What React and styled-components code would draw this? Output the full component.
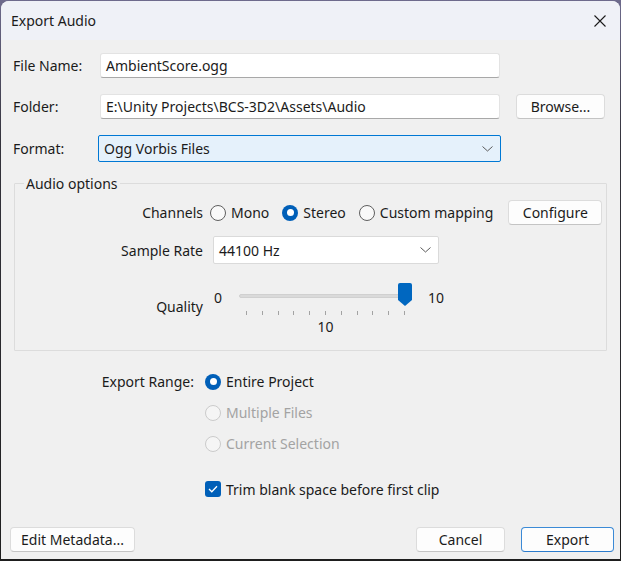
import React from "react";
import styled, { createGlobalStyle } from "styled-components";

const GlobalStyle = createGlobalStyle`
  html, body, #root { height: 100%; }
  body {
    margin: 0;
    background: linear-gradient(#6e6b8d, #34333c 25%, #1e1e1e);
    font-family: "Noto Sans", "Open Sans", sans-serif;
    font-size: 14px;
    color: #1b1b1b;
  }
`;

const Window = styled.div`
  box-sizing: border-box;
  height: calc(100% - 3px);
  margin: 1px 1px 0 1px;
  border-radius: 8px 8px 0 0;
  overflow: hidden;
  display: flex;
  flex-direction: column;
  background: #f0f0f0;
`;

const TitleBar = styled.div`
  height: 39px;
  flex: none;
  display: flex;
  align-items: center;
  justify-content: space-between;
  padding: 0 14px 0 10px;
  background: #eff1f7;
  font-size: 14px;
`;

const Body = styled.div`
  flex: 1;
  display: flex;
  flex-direction: column;
  padding: 13px 6px 7px 9px;
`;

const Row = styled.div`
  display: flex;
  align-items: center;
  margin-left: 3px;
  margin-top: ${(p) => p.$top || 0}px;
`;

const Label = styled.div`
  width: ${(p) => p.$w}px;
  flex: none;
`;

const TextBox = styled.div`
  box-sizing: border-box;
  width: 400px;
  height: 25px;
  display: flex;
  align-items: center;
  padding-left: 5px;
  background: #fff;
  border: 1px solid #e3e3e3;
  border-bottom-color: #a8a8a8;
  border-radius: 3px;
`;

const Select = styled.div`
  box-sizing: border-box;
  width: ${(p) => p.$w}px;
  height: ${(p) => p.$h}px;
  display: flex;
  align-items: center;
  justify-content: space-between;
  padding: 0 7px 0 5px;
  background: ${(p) => (p.$focus ? "#e5f1fb" : "#fff")};
  border: 1px solid ${(p) => (p.$focus ? "#0078d4" : "#dadada")};
  border-radius: 2px;
  margin-left: ${(p) => p.$ml || 0}px;
  margin-top: ${(p) => p.$top || 0}px;
`;

const Button = styled.div`
  box-sizing: border-box;
  width: ${(p) => p.$w}px;
  height: 25px;
  flex: none;
  display: flex;
  align-items: center;
  justify-content: center;
  background: #fdfdfd;
  border: 1px solid ${(p) => (p.$primary ? "#3b8ad6" : "#dcdcdc")};
  border-bottom-color: ${(p) => (p.$primary ? "#2b7bcc" : "#c4c4c4")};
  border-radius: 4px;
  margin-left: ${(p) => p.$ml || 0}px;
`;

const Group = styled.fieldset`
  margin: 12px 7px 0 4px;
  padding: 7px 0 14px 0;
  border: 1px solid #dcdcdc;
  border-radius: 1px;
`;

const Legend = styled.legend`
  margin-left: 9px;
  padding: 0 2px;
`;

const OptGrid = styled.div`
  display: grid;
  grid-template-columns: 188px 1fr;
  column-gap: 7px;
  align-items: center;
`;

const RightLabel = styled.div`
  text-align: right;
  grid-row: ${(p) => p.$row};
  margin-top: ${(p) => p.$top || 0}px;
`;

const Choices = styled.div`
  display: flex;
  align-items: center;
  gap: 13px;
`;

const Choice = styled.div`
  display: flex;
  align-items: center;
  gap: 5px;
  color: ${(p) => (p.$disabled ? "#a3a3a3" : "#1b1b1b")};
`;

const RadioDot = styled.span`
  box-sizing: border-box;
  width: 16px;
  height: 16px;
  border-radius: 50%;
  flex: none;
  background: ${(p) => (p.$on ? "#005fb8" : p.$disabled ? "#f5f5f5" : "#f9f9f9")};
  border: ${(p) =>
    p.$on ? "none" : `1px solid ${p.$disabled ? "#cbcbcb" : "#5f5f5f"}`};
  display: flex;
  align-items: center;
  justify-content: center;
  &::after {
    content: "";
    display: ${(p) => (p.$on ? "block" : "none")};
    width: 7px;
    height: 7px;
    border-radius: 50%;
    background: #fff;
  }
`;

const Check = styled.span`
  width: 16px;
  height: 16px;
  flex: none;
  border-radius: 3px;
  background: #005fb8;
  display: flex;
  align-items: center;
  justify-content: center;
`;

const QualityWrap = styled.div`
  display: flex;
  align-items: flex-start;
  margin-left: 4px;
  margin-top: 19px;
`;

const EndNum = styled.div`
  line-height: 23px;
  margin-top: 3px;
  margin-left: ${(p) => p.$ml || 0}px;
`;

const SliderCol = styled.div`
  width: 173px;
  margin-left: 17px;
  display: flex;
  flex-direction: column;
  align-items: center;
`;

const SliderBox = styled.div`
  position: relative;
  width: 100%;
  height: 23px;
`;

const Track = styled.div`
  position: absolute;
  left: 0;
  right: 0;
  top: 11px;
  height: 4px;
  border-radius: 2px;
  background: #dadada;
  border: 1px solid #d0d0d0;
  box-sizing: border-box;
`;

const Thumb = styled.svg`
  position: absolute;
  top: 0;
`;

const Ticks = styled.div`
  width: 159px;
  height: 4px;
  margin-top: 5px;
  display: flex;
  justify-content: space-between;
  span {
    width: 1px;
    height: 4px;
    background: #a3a3a3;
  }
`;

const Value = styled.div`
  margin-top: 3px;
  line-height: 18px;
`;

const RangeGrid = styled.div`
  display: grid;
  grid-template-columns: 181px 1fr;
  column-gap: 11px;
  grid-auto-rows: 31px;
  align-items: center;
  margin-top: 15px;
  margin-left: 3px;
`;

const CheckRow = styled.div`
  grid-column: 2;
  margin-top: 29px;
`;

const Footer = styled.div`
  margin-top: auto;
  display: flex;
  align-items: center;
`;

const Spacer = styled.div`
  flex: 1;
`;

const Chevron = () => (
  <svg width="11" height="6" viewBox="0 0 11 6">
    <path d="M0.5 0.5 L5.5 5 L10.5 0.5" fill="none" stroke="#5a5a5a" strokeWidth="1" />
  </svg>
);

const Radio = ({ on, disabled, children }) => (
  <Choice $disabled={disabled}>
    <RadioDot $on={on} $disabled={disabled} />
    {children}
  </Choice>
);

const App = () => {
  const quality = 10;
  const thumbLeft = (quality / 10) * (173 - 14);
  return (
    <>
      <GlobalStyle />
      <Window>
        <TitleBar>
          <span>Export Audio</span>
          <svg width="12" height="12" viewBox="0 0 12 12">
            <path d="M0.5 0.5 L11.5 11.5 M11.5 0.5 L0.5 11.5" stroke="#1b1b1b" strokeWidth="1.1" />
          </svg>
        </TitleBar>
        <Body>
          <Row>
            <Label $w={87}>File Name:</Label>
            <TextBox>AmbientScore.ogg</TextBox>
          </Row>
          <Row $top={16}>
            <Label $w={87}>Folder:</Label>
            <TextBox>E:\Unity Projects\BCS-3D2\Assets\Audio</TextBox>
            <Button $w={89} $ml={16}>Browse...</Button>
          </Row>
          <Row $top={16}>
            <Label $w={85}>Format:</Label>
            <Select $w={403} $h={27} $focus>
              <span>Ogg Vorbis Files</span>
              <Chevron />
            </Select>
          </Row>

          <Group>
            <Legend>Audio options</Legend>
            <OptGrid>
              <RightLabel $row={1}>Channels</RightLabel>
              <Choices>
                <Radio>Mono</Radio>
                <Radio on>Stereo</Radio>
                <Radio>Custom mapping</Radio>
                <Button $w={94} $ml={2}>Configure</Button>
              </Choices>
              <RightLabel $row={2} $top={11}>Sample Rate</RightLabel>
              <Select $w={226} $h={28} $ml={3} $top={11}>
                <span>44100 Hz</span>
                <Chevron />
              </Select>
              <RightLabel $row={3} $top={13}>Quality</RightLabel>
              <QualityWrap>
                <EndNum>0</EndNum>
                <SliderCol>
                  <SliderBox>
                    <Track />
                    <Thumb style={{ left: thumbLeft }} width="14" height="23" viewBox="0 0 14 23">
                      <path d="M2 0 H12 Q14 0 14 2 V17 L7 23 L0 17 V2 Q0 0 2 0 Z" fill="#0067c0" />
                    </Thumb>
                  </SliderBox>
                  <Ticks>
                    {Array.from({ length: 11 }).map((_, i) => (
                      <span key={i} />
                    ))}
                  </Ticks>
                  <Value>{quality}</Value>
                </SliderCol>
                <EndNum $ml={16}>10</EndNum>
              </QualityWrap>
            </OptGrid>
          </Group>

          <RangeGrid>
            <RightLabel $row={1}>Export Range:</RightLabel>
            <Radio on>Entire Project</Radio>
            <div />
            <Radio disabled>Multiple Files</Radio>
            <div />
            <Radio disabled>Current Selection</Radio>
            <CheckRow>
              <Choice>
                <Check>
                  <svg width="10" height="8" viewBox="0 0 10 8">
                    <path d="M1 4 L3.8 6.8 L9 1.2" fill="none" stroke="#fff" strokeWidth="1.3" />
                  </svg>
                </Check>
                Trim blank space before first clip
              </Choice>
            </CheckRow>
          </RangeGrid>

          <Footer>
            <Button $w={125}>Edit Metadata...</Button>
            <Spacer />
            <Button $w={89}>Cancel</Button>
            <Button $w={93} $ml={16} $primary>Export</Button>
          </Footer>
        </Body>
      </Window>
    </>
  );
};

export default App;
